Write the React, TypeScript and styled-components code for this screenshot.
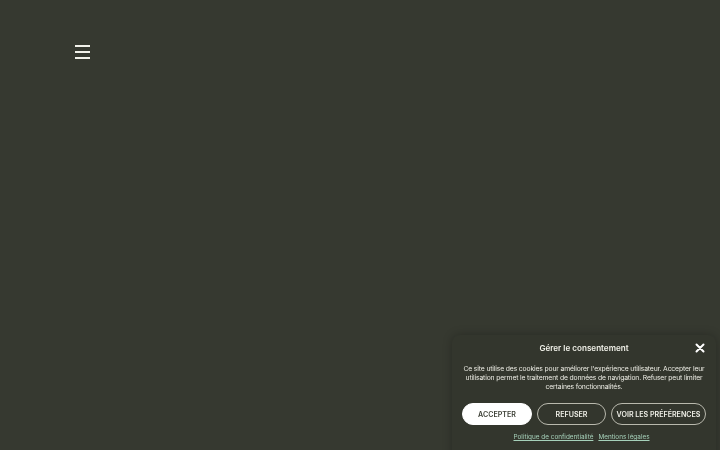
import React from 'react'
import styled, { createGlobalStyle } from 'styled-components'

const Global = createGlobalStyle`
  html, body {
    margin: 0;
    padding: 0;
    background: #363930;
    font-family: Inter, "Liberation Sans", sans-serif;
  }
`

const Page = styled.div`
  width: 720px;
  height: 450px;
  background: #363930;
  position: relative;
  overflow: hidden;
`

const Header = styled.header`
  padding: 45px 0 0 75px;
`

const Burger = styled.button`
  display: flex;
  flex-direction: column;
  gap: 4px;
  width: 15px;
  padding: 0;
  background: none;
  border: 0;
  cursor: pointer;

  span {
    display: block;
    height: 2px;
    background: #f2f2ea;
  }
`

const Banner = styled.div`
  position: fixed;
  left: 452px;
  top: 335px;
  width: 264px;
  height: 130px;
  box-sizing: border-box;
  padding: 7px 8px 0;
  background: #33362d;
  border-radius: 8px;
  box-shadow: 0 0 10px rgba(0, 0, 0, 0.25);
  color: #f0f0e8;
  display: flex;
  flex-direction: column;
  align-items: center;
`

const TitleRow = styled.div`
  width: 100%;
  display: flex;
  align-items: center;
  justify-content: center;
  position: relative;
  height: 12px;
`

const Title = styled.h2`
  margin: 0;
  font-size: 8.1px;
  font-weight: 600;
`

const Close = styled.button`
  position: absolute;
  right: 3px;
  top: 1px;
  padding: 0;
  background: none;
  border: 0;
  width: 10px;
  height: 10px;
  display: flex;
`

const Message = styled.p`
  margin: 10px 0 0;
  font-size: 6.8px;
  line-height: 9px;
  text-align: center;
  color: #ebebe3;
  letter-spacing: -0.15px;
`

const Buttons = styled.div`
  display: flex;
  gap: 5px;
  margin-top: 12px;
`

const Btn = styled.button<{ $primary?: boolean; $w: number }>`
  width: ${p => p.$w}px;
  height: 22px;
  box-sizing: border-box;
  border-radius: 12px;
  border: 1px solid ${p => (p.$primary ? '#ffffff' : '#b9b9ad')};
  background: ${p => (p.$primary ? '#ffffff' : 'transparent')};
  color: ${p => (p.$primary ? '#3a3d33' : '#f0f0e8')};
  font-family: inherit;
  font-size: 7.1px;
  font-weight: 600;
  padding: 0;
  white-space: nowrap;
`

const Links = styled.div`
  display: flex;
  gap: 5px;
  margin-top: 8px;
  margin-right: 5px;

  a {
    color: #a6d1ba;
    font-size: 6.4px;
    text-decoration: underline;
  }
`

export default function App() {
  return (
    <Page>
      <Global />
      <Header>
        <Burger aria-label="Menu">
          <span />
          <span />
          <span />
        </Burger>
      </Header>
      <Banner>
        <TitleRow>
          <Title>Gérer le consentement</Title>
          <Close aria-label="Fermer">
            <svg width="10" height="10" viewBox="0 0 10 10">
              <path d="M1.5 1.5 L8.5 8.5 M8.5 1.5 L1.5 8.5" stroke="#ffffff" strokeWidth="2" strokeLinecap="round" />
            </svg>
          </Close>
        </TitleRow>
        <Message>
          Ce site utilise des cookies pour améliorer l'expérience utilisateur. Accepter leur utilisation permet le
          traitement de données de navigation. Refuser peut limiter certaines fonctionnalités.
        </Message>
        <Buttons>
          <Btn $primary $w={70}>ACCEPTER</Btn>
          <Btn $w={69}>REFUSER</Btn>
          <Btn $w={95}>VOIR LES PRÉFÉRENCES</Btn>
        </Buttons>
        <Links>
          <a href="#">Politique de confidentialité</a>
          <a href="#">Mentions légales</a>
        </Links>
      </Banner>
    </Page>
  )
}
